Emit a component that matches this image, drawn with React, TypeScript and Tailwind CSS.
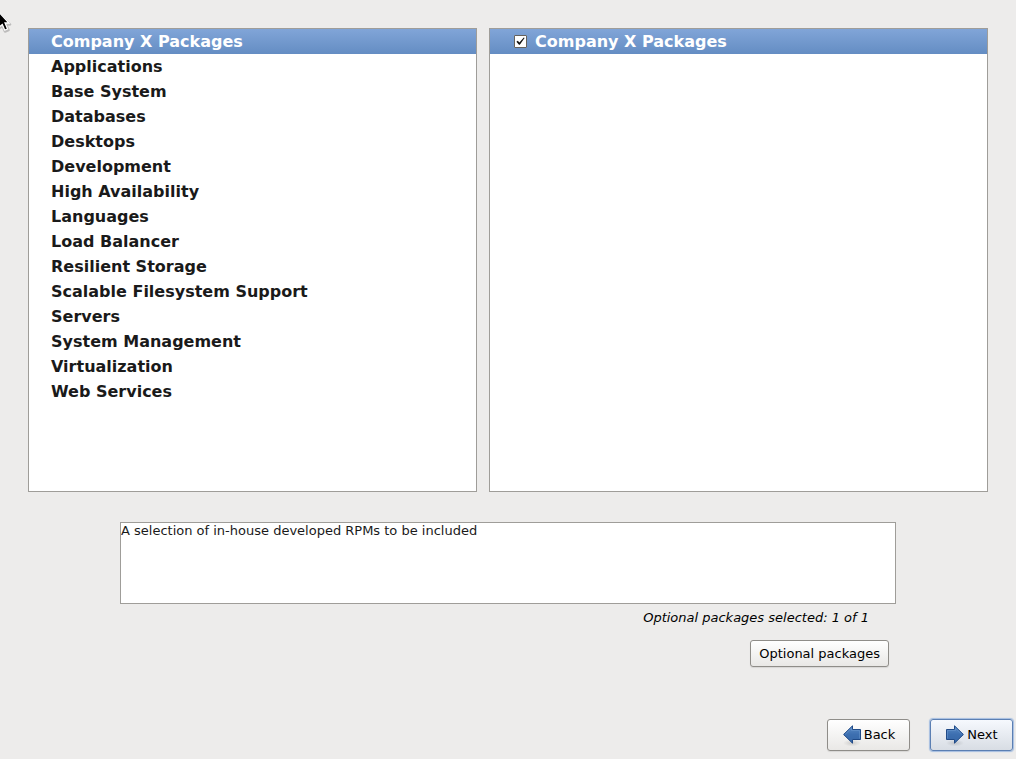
import { useState } from "react";

const categories = [
  "Company X Packages",
  "Applications",
  "Base System",
  "Databases",
  "Desktops",
  "Development",
  "High Availability",
  "Languages",
  "Load Balancer",
  "Resilient Storage",
  "Scalable Filesystem Support",
  "Servers",
  "System Management",
  "Virtualization",
  "Web Services",
];

const selectedRow = "bg-linear-to-b from-[#81a5d8] to-[#648dc3] text-white";

function ArrowIcon({ back = false }: { back?: boolean }) {
  const id = back ? "back" : "next";
  return (
    <svg width="20" height="24" viewBox="0 0 20 24" aria-hidden="true" className="shrink-0">
      <defs>
        <linearGradient id={`${id}-fill`} x1="0" y1="0" x2="0" y2="1">
          <stop offset="0" stopColor="#5b8bc6" />
          <stop offset="0.5" stopColor="#3d6fb0" />
          <stop offset="1" stopColor="#3566a6" />
        </linearGradient>
        <radialGradient id={`${id}-shade`}>
          <stop offset="0" stopColor="#000" stopOpacity="0.14" />
          <stop offset="1" stopColor="#000" stopOpacity="0" />
        </radialGradient>
      </defs>
      <ellipse cx="10" cy="20" rx="9" ry="3.5" fill={`url(#${id}-shade)`} />
      <g transform={back ? "translate(20 0) scale(-1 1)" : undefined}>
        <path
          d="M1.5 6.5H9.5V2.8L18.4 11.5L9.5 20.2V16.5H1.5Z"
          fill={`url(#${id}-fill)`}
          stroke="#204a87"
          strokeLinejoin="round"
        />
        <path d="M2.5 15.5V7.5H10.5V5.2L16.9 11.5" fill="none" stroke="#6c99d0" strokeOpacity="0.5" />
      </g>
    </svg>
  );
}

function Pointer() {
  return (
    <svg
      width="14"
      height="26"
      viewBox="0 0 14 26"
      aria-hidden="true"
      className="pointer-events-none absolute left-0 top-[10px]"
    >
      <path
        d="M-5 0L10 14.5H6L8.5 20L5 21.5L2.5 16L-2 19Z"
        fill="none"
        stroke="#000"
        strokeOpacity="0.2"
        strokeWidth="2.5"
        strokeLinejoin="round"
      />
      <path
        d="M-5 -2L9 13H5L7.6 19L4.8 20.2L2.3 14.6L-2 18Z"
        fill="#000"
        stroke="#fff"
        strokeWidth="1.3"
      />
    </svg>
  );
}

export default function App() {
  const [category, setCategory] = useState(categories[0]);
  const [included, setIncluded] = useState(true);

  return (
    <div className="relative flex min-h-screen flex-col bg-[#edeceb] font-['DejaVu_Sans',sans-serif] text-[13px] text-black">
      <Pointer />
      <main className="flex flex-1 flex-col px-7 pt-7">
        <div className="grid flex-1 grid-cols-[9fr_10fr] gap-3">
          <ul aria-label="Categories" className="border border-[#9f9d99] bg-white">
            {categories.map((name) => (
              <li key={name}>
                <button
                  type="button"
                  onClick={() => setCategory(name)}
                  className={`block h-[25px] w-full px-[22px] text-left text-base leading-[25px] font-bold ${
                    name === category ? selectedRow : "text-[#1a1a1a]"
                  }`}
                >
                  {name}
                </button>
              </li>
            ))}
          </ul>
          <ul aria-label="Package groups" className="border border-[#9f9d99] bg-white">
            <li className={`flex h-[25px] items-center gap-2 px-6 ${selectedRow}`}>
              <span className="grid size-[13px] shrink-0">
                <input
                  id="group"
                  type="checkbox"
                  checked={included}
                  onChange={(e) => setIncluded(e.target.checked)}
                  className="peer col-start-1 row-start-1 size-[13px] appearance-none rounded-[1px] border border-[#66625d] bg-white"
                />
                <svg
                  viewBox="0 0 13 13"
                  aria-hidden="true"
                  className="pointer-events-none invisible col-start-1 row-start-1 size-[13px] peer-checked:visible"
                >
                  <path d="M2.4 6.8L3.8 5.8L5.4 7.6L9.8 2.4L10.6 3L5.8 9.8H5Z" fill="#111" />
                </svg>
              </span>
              <label htmlFor="group" className="text-base leading-[25px] font-bold">
                Company X Packages
              </label>
            </li>
          </ul>
        </div>
        <section className="mx-[92px] mt-[30px] flex flex-col">
          <textarea
            readOnly
            aria-label="Description"
            value="A selection of in-house developed RPMs to be included"
            className="block h-[82px] w-full resize-none border border-[#9f9d99] bg-white p-0 leading-4 text-[#1a1a1a]"
          />
          <p className="mt-1.5 mr-[27px] text-right leading-4 italic">Optional packages selected: 1 of 1</p>
          <button
            type="button"
            className="mt-3.5 mr-[7px] h-[27px] self-end rounded-[3px] border border-[#8f8d89] bg-linear-to-b from-white to-[#e9e8e6] px-2 leading-4 shadow-[0_1px_1px_#00000018]"
          >
            Optional packages
          </button>
        </section>
      </main>
      <footer className="mt-[52px] flex justify-end gap-5 pr-[3px] pb-2">
        <button
          type="button"
          className="flex h-8 w-[83px] items-center justify-center gap-0.5 rounded-[3px] border border-[#8f8d89] bg-linear-to-b from-white to-[#e9e8e6] leading-4 shadow-[0_1px_1px_#00000018]"
        >
          <ArrowIcon back />
          Back
        </button>
        <button
          type="button"
          className="flex h-8 w-[83px] items-center justify-center gap-0.5 rounded-[3px] border border-[#5b7fb3] bg-linear-to-b from-[#f6f9fe] to-[#d8dde4] leading-4 shadow-[0_0_1px_1px_#a3bde0]"
        >
          <ArrowIcon />
          Next
        </button>
      </footer>
    </div>
  );
}
